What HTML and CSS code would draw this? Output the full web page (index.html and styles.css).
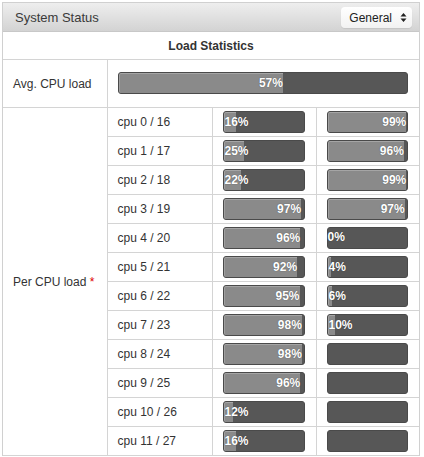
FILE: index.html
```html
<!DOCTYPE html>
<html>
<head>
<meta charset="utf-8">
<link rel="stylesheet" href="styles.css">
</head>
<body>
<div class="panel">
  <div class="panel-head">
    <span class="panel-title">System Status</span>
    <div class="select">General
      <svg class="select-arrows" width="7" height="11" viewBox="0 0 7 11"><path d="M3.5 1 L6.5 4.5 H0.5 Z M3.5 10 L6.5 6.5 H0.5 Z" fill="#222"/></svg>
    </div>
  </div>
  <table class="stats">
    <colgroup><col class="c1"><col class="c2"><col class="c3"><col class="c4"></colgroup>
    <tr><th colspan="4">Load Statistics</th></tr>
    <tr class="avg">
      <td class="label">Avg. CPU load</td>
      <td colspan="3"><div class="bar"><div class="fill" style="width:57%">57%</div></div></td>
    </tr>
    <tr>
      <td class="label" rowspan="12">Per CPU load <span class="req">*</span></td>
      <td>cpu 0 / 16</td>
      <td class="bc"><div class="bar"><div class="fill" style="width:16%">16%</div></div></td>
      <td class="bc"><div class="bar"><div class="fill" style="width:99%">99%</div></div></td>
    </tr>
    <tr><td>cpu 1 / 17</td>
      <td class="bc"><div class="bar"><div class="fill" style="width:25%">25%</div></div></td>
      <td class="bc"><div class="bar"><div class="fill" style="width:96%">96%</div></div></td></tr>
    <tr><td>cpu 2 / 18</td>
      <td class="bc"><div class="bar"><div class="fill" style="width:22%">22%</div></div></td>
      <td class="bc"><div class="bar"><div class="fill" style="width:99%">99%</div></div></td></tr>
    <tr><td>cpu 3 / 19</td>
      <td class="bc"><div class="bar"><div class="fill" style="width:97%">97%</div></div></td>
      <td class="bc"><div class="bar"><div class="fill" style="width:97%">97%</div></div></td></tr>
    <tr><td>cpu 4 / 20</td>
      <td class="bc"><div class="bar"><div class="fill" style="width:96%">96%</div></div></td>
      <td class="bc"><div class="bar"><div class="fill empty" style="width:0%">0%</div></div></td></tr>
    <tr><td>cpu 5 / 21</td>
      <td class="bc"><div class="bar"><div class="fill" style="width:92%">92%</div></div></td>
      <td class="bc"><div class="bar"><div class="fill" style="width:4%">4%</div></div></td></tr>
    <tr><td>cpu 6 / 22</td>
      <td class="bc"><div class="bar"><div class="fill" style="width:95%">95%</div></div></td>
      <td class="bc"><div class="bar"><div class="fill" style="width:6%">6%</div></div></td></tr>
    <tr><td>cpu 7 / 23</td>
      <td class="bc"><div class="bar"><div class="fill" style="width:98%">98%</div></div></td>
      <td class="bc"><div class="bar"><div class="fill" style="width:10%">10%</div></div></td></tr>
    <tr><td>cpu 8 / 24</td>
      <td class="bc"><div class="bar"><div class="fill" style="width:98%">98%</div></div></td>
      <td class="bc"><div class="bar"></div></td></tr>
    <tr><td>cpu 9 / 25</td>
      <td class="bc"><div class="bar"><div class="fill" style="width:96%">96%</div></div></td>
      <td class="bc"><div class="bar"></div></td></tr>
    <tr><td>cpu 10 / 26</td>
      <td class="bc"><div class="bar"><div class="fill" style="width:12%">12%</div></div></td>
      <td class="bc"><div class="bar"></div></td></tr>
    <tr><td>cpu 11 / 27</td>
      <td class="bc"><div class="bar"><div class="fill" style="width:16%">16%</div></div></td>
      <td class="bc"><div class="bar"></div></td></tr>
  </table>
</div>
</body>
</html>
```
FILE: styles.css
```css
html, body {
  margin: 0;
  padding: 0;
  background: #fff;
}

body {
  font-family: "Liberation Sans", Arial, sans-serif;
  color: #333;
  font-size: 12px;
}

.panel {
  margin: 2px 0 0 2px;
  width: 418px;
  border: 1px solid #d0d0d0;
  border-bottom: none;
  box-sizing: border-box;
}

.panel-head {
  height: 28px;
  display: flex;
  align-items: center;
  justify-content: space-between;
  padding: 0 7px 0 12px;
  background: linear-gradient(#eeeeee, #d3d3d3);
  border-bottom: 1px solid #c8c8c8;
}

.panel-title {
  font-size: 13px;
  color: #3a3a3a;
}

.select {
  display: flex;
  align-items: center;
  gap: 8px;
  height: 21px;
  padding: 0 5px 0 8px;
  background: linear-gradient(#ffffff, #f2f2f2);
  border-radius: 4px;
  box-shadow: 0 1px 1px rgba(0, 0, 0, 0.08);
  font-size: 12px;
  color: #222;
  margin-top: 1px;
}

.stats {
  width: 100%;
  border-collapse: collapse;
  table-layout: fixed;
}

.c1 { width: 104px; }
.c2 { width: 105px; }
.c3 { width: 104px; }
.c4 { width: 103px; }

.stats th {
  height: 27px;
  padding: 0;
  font-weight: bold;
  font-size: 12px;
  color: #333;
  text-align: center;
  border-bottom: 1px solid #d4d4d4;
}

.stats td {
  height: 29px;
  padding: 0 0 0 10px;
  border: 1px solid #d4d4d4;
  box-sizing: border-box;
}

.stats td:first-child { border-left: none; }
.stats td:last-child { border-right: none; }

.stats .avg td {
  height: 48px;
}

.stats .bc {
  padding: 0 11px 0 10px;
}

.stats .avg td[colspan] {
  padding: 0 11px 2px 10px;
}

.req {
  color: #d00;
}

.bar {
  height: 22px;
  box-sizing: border-box;
  background: #575757;
  border: 1px solid #4a4a4a;
  border-radius: 3px;
}

/* label is right-aligned inside the fill; when it doesn't fit it
   falls back to start alignment and runs on past the fill */
.fill {
  height: 100%;
  box-sizing: border-box;
  background: #8a8a8a;
  border-top: 1px solid #a5a5a5;
  border-left: 1px solid #a0a0a0;
  border-radius: 2px 0 0 2px;
  text-align: right;
  line-height: 19px;
  white-space: nowrap;
  color: #fff;
  font-weight: bold;
  font-size: 12px;
  text-shadow: 0 0 1px rgba(0, 0, 0, 0.5);
}

.fill.empty {
  border: none;
}
```
